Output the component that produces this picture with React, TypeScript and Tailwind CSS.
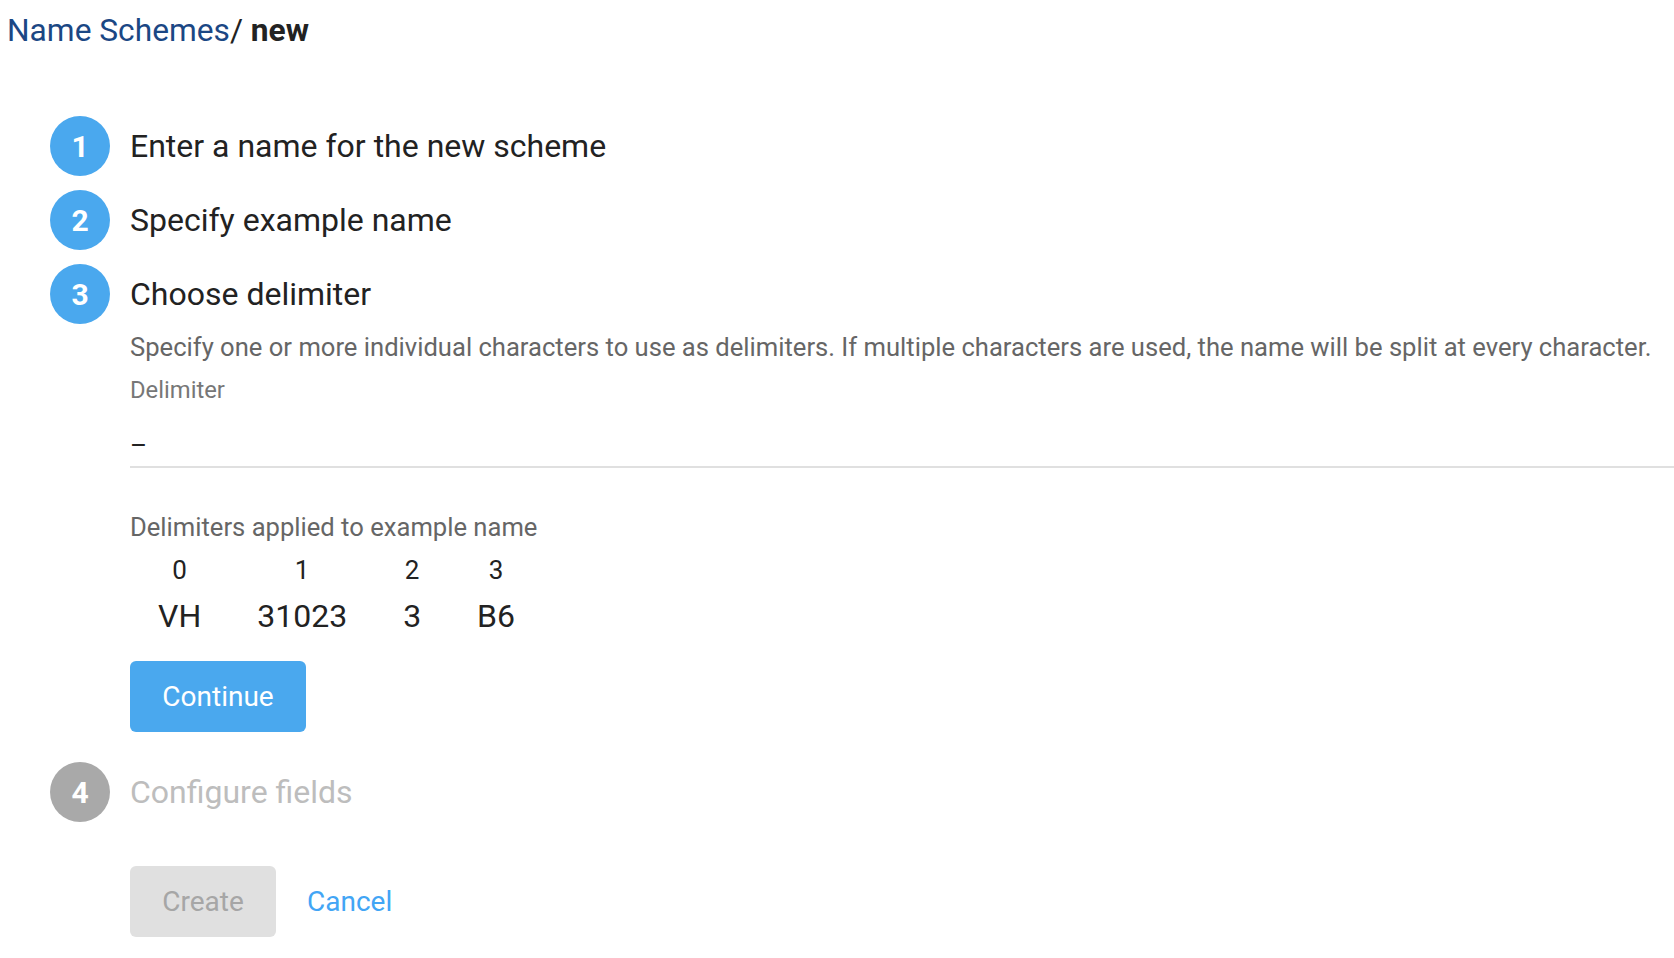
export default function App() {
  const cols = [
    { i: "0", v: "VH" },
    { i: "1", v: "31023" },
    { i: "2", v: "3" },
    { i: "3", v: "B6" },
  ];
  return (
    <div className="w-[1674px] h-[958px] overflow-hidden bg-white" style={{ fontFamily: "Roboto, 'Noto Sans', sans-serif" }}>
      <div className="pl-[7px] pt-[11px] h-[40px] text-[31.7px] leading-[40px] whitespace-nowrap">
        <span className="text-[#1b4784]">Name Schemes</span>
        <span className="text-[#222]">/ </span>
        <span className="font-bold text-[#222]">new</span>
      </div>
      <div className="pl-[50px] mt-[76px] flex flex-col">
        <div className="flex flex-col gap-[14px]">
          {["Enter a name for the new scheme", "Specify example name", "Choose delimiter"].map((t, idx) => (
            <div key={t} className="flex items-center gap-[20px] h-[60px]">
              <div className="w-[60px] h-[60px] rounded-full bg-[#4aa8ee] flex items-center justify-center text-white font-bold text-[30px]">
                {idx + 1}
              </div>
              <div className="text-[32px] text-[#222]">{t}</div>
            </div>
          ))}
        </div>
        <div className="ml-[80px] flex flex-col">
          <div className="mt-[9px] text-[25.6px] leading-[28px] text-[#666] whitespace-nowrap">
            Specify one or more individual characters to use as delimiters. If multiple characters are used, the name will be split at every character.
          </div>
          <div className="mt-[16px] text-[23.8px] leading-[26px] text-[#777]">Delimiter</div>
          <div className="border-b-2 border-[#e0e0e0] pt-[26px] pb-[5px] text-[26px] leading-[32px] text-[#222]">–</div>
          <div className="mt-[45px] text-[25.6px] leading-[28px] text-[#666]">Delimiters applied to example name</div>
          <div className="flex mt-[13px]">
            {cols.map((c) => (
              <div key={c.i} className="flex flex-col items-center px-[28px]">
                <div className="text-[26px] leading-[32px] text-[#222]">{c.i}</div>
                <div className="mt-[12px] text-[32px] leading-[36px] text-[#222]">{c.v}</div>
              </div>
            ))}
          </div>
          <div className="mt-[27px]">
            <button className="w-[176px] h-[71px] rounded-[6px] bg-[#4aa8ee] text-white text-[28px]">Continue</button>
          </div>
        </div>
        <div className="mt-[30px] flex items-center gap-[20px] h-[60px]">
          <div className="w-[60px] h-[60px] rounded-full bg-[#a9a9a9] flex items-center justify-center text-white font-bold text-[30px]">4</div>
          <div className="text-[32px] text-[#bdbdbd]">Configure fields</div>
        </div>
        <div className="ml-[80px] mt-[44px] flex items-center gap-[31px]">
          <button className="w-[146px] h-[71px] rounded-[6px] bg-[#e0e0e0] text-[#a6a6a6] text-[28px]">Create</button>
          <span className="text-[28px] text-[#42a5f5]">Cancel</span>
        </div>
      </div>
    </div>
  );
}
